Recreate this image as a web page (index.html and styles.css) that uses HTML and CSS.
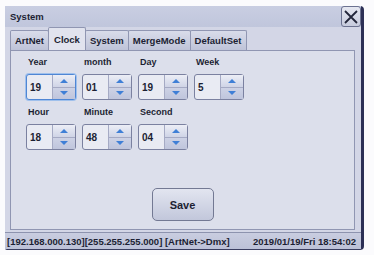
FILE: index.html
```html
<!DOCTYPE html>
<html lang="en">

<head>
    <meta charset="UTF-8">
    <meta name="viewport" content="width=device-width, initial-scale=1.0">
    <title>System</title>
    <link rel="stylesheet" href="styles.css">
</head>

<body>
    <section class="screen">
        <div class="titlebar">
            <span class="title">System</span>
            <div class="close">
                <svg width="16" height="16" viewBox="0 0 16 16">
                    <path d="M2 2 L14 14 M14 2 L2 14" stroke="#23263a" stroke-width="1.8" fill="none" />
                </svg>
            </div>
        </div>
        <div class="content">
            <div class="tabs">
                <div class="tab">ArtNet</div>
                <div class="tab active">Clock</div>
                <div class="tab">System</div>
                <div class="tab">MergeMode</div>
                <div class="tab">DefaultSet</div>
            </div>
            <div class="panel">
                <div class="fields">
                    <div class="field">
                        <span class="label">Year</span>
                        <div class="spin focus">
                            <span class="value">19</span>
                            <div class="arrows"><div class="up"></div><div class="down"></div></div>
                        </div>
                    </div>
                    <div class="field">
                        <span class="label">month</span>
                        <div class="spin">
                            <span class="value">01</span>
                            <div class="arrows"><div class="up"></div><div class="down"></div></div>
                        </div>
                    </div>
                    <div class="field">
                        <span class="label">Day</span>
                        <div class="spin">
                            <span class="value">19</span>
                            <div class="arrows"><div class="up"></div><div class="down"></div></div>
                        </div>
                    </div>
                    <div class="field">
                        <span class="label">Week</span>
                        <div class="spin">
                            <span class="value">5</span>
                            <div class="arrows"><div class="up"></div><div class="down"></div></div>
                        </div>
                    </div>
                    <div class="field">
                        <span class="label">Hour</span>
                        <div class="spin">
                            <span class="value">18</span>
                            <div class="arrows"><div class="up"></div><div class="down"></div></div>
                        </div>
                    </div>
                    <div class="field">
                        <span class="label">Minute</span>
                        <div class="spin">
                            <span class="value">48</span>
                            <div class="arrows"><div class="up"></div><div class="down"></div></div>
                        </div>
                    </div>
                    <div class="field">
                        <span class="label">Second</span>
                        <div class="spin">
                            <span class="value">04</span>
                            <div class="arrows"><div class="up"></div><div class="down"></div></div>
                        </div>
                    </div>
                </div>
                <div class="actions">
                    <div class="save">Save</div>
                </div>
            </div>
        </div>
        <div class="statusbar">
            <span>[192.168.000.130][255.255.255.000] [ArtNet-&gt;Dmx]</span>
            <span>2019/01/19/Fri 18:54:02</span>
        </div>
    </section>
</body>

</html>
```

FILE: styles.css
```css
body {
    margin: 0;
    width: 374px;
    height: 255px;
    background-color: #fbfbfd;
    font-family: "Liberation Sans", Arial, sans-serif;
    font-weight: bold;
    color: #1c1f33;
    overflow: hidden;
}

.screen {
    margin: 6px 0 0 5px;
    width: 356px;
    height: 243px;
    background-color: #d3d6e6;
    border-right: 3px solid #2c3056;
    border-bottom: 1px solid #3a3e60;
    border-radius: 2px 4px 4px 2px;
    display: flex;
    flex-direction: column;
}

.titlebar {
    height: 21px;
    display: flex;
    align-items: center;
    justify-content: space-between;
    background: linear-gradient(#c9cee2, #c0c6dc);
    padding-left: 5px;
}

.title {
    font-size: 9.5px;
}

.close {
    width: 18px;
    height: 19px;
    border: 1px solid #6c7290;
    border-radius: 3px;
    background: linear-gradient(#e6e8f1, #c7cbdd);
    display: flex;
    align-items: center;
    justify-content: center;
}

.content {
    flex: 1;
    padding: 2px 6px 2px 5px;
    display: flex;
    flex-direction: column;
}

.tabs {
    display: flex;
    align-items: flex-end;
    height: 21px;
}

.tab {
    height: 19px;
    padding: 0 4px;
    font-size: 9.5px;
    display: flex;
    align-items: center;
    background: linear-gradient(#d9dcea, #bec3d8);
    border: 1px solid #9096b2;
    border-bottom: none;
    border-radius: 2px 2px 0 0;
    margin-right: -1px;
}

.tab.active {
    height: 22px;
    background: #e1e3ee;
    padding: 0 5px;
}

.panel {
    flex: 1;
    background-color: #dcdfeb;
    border: 1px solid #9096b2;
    display: flex;
    flex-direction: column;
    padding: 4px 0 8px 15px;
}

.fields {
    display: grid;
    grid-template-columns: repeat(4, 56px);
    row-gap: 5px;
}

.field {
    display: flex;
    flex-direction: column;
}

.label {
    font-size: 9px;
    height: 14px;
    line-height: 14px;
    padding-left: 2px;
    margin-bottom: 5px;
}

.spin {
    width: 48px;
    height: 24px;
    border: 1px solid #7b81a0;
    border-radius: 3px;
    display: flex;
    background-color: #e9ebf3;
}

.spin.focus {
    border-color: #4f86d4;
    box-shadow: 0 0 0 1px #9fc0ec;
}

.value {
    width: 22px;
    font-size: 10px;
    display: flex;
    align-items: center;
    padding-left: 3px;
}

.arrows {
    flex: 1;
    display: flex;
    flex-direction: column;
    border-left: 1px solid #a5aac4;
}

.arrows > div {
    flex: 1;
    display: flex;
    align-items: center;
    justify-content: center;
}

.up {
    background: linear-gradient(#eceef6, #cfd4e6);
    border-bottom: 1px solid #a5aac4;
}

.down {
    background: linear-gradient(#cdd2e5, #bfc5dc);
}

.up::after,
.down::after {
    content: "";
    width: 0;
    height: 0;
    border-left: 4px solid transparent;
    border-right: 4px solid transparent;
}

.up::after {
    border-bottom: 4px solid #3f7fd6;
}

.down::after {
    border-top: 4px solid #3f7fd6;
}

.actions {
    flex: 1;
    display: flex;
    align-items: flex-end;
    justify-content: center;
    padding-right: 15px;
}

.save {
    width: 60px;
    height: 31px;
    border: 1px solid #737993;
    border-radius: 5px;
    background: linear-gradient(#e2e5f0, #c2c7db);
    font-size: 11px;
    display: flex;
    align-items: center;
    justify-content: center;
}

.statusbar {
    height: 16px;
    display: flex;
    align-items: center;
    justify-content: space-between;
    padding: 0 5px 0 2px;
    font-size: 9.5px;
    background: linear-gradient(#c9cde0, #bcc1d7);
    border-top: 1px solid #8d93ae;
}
```
